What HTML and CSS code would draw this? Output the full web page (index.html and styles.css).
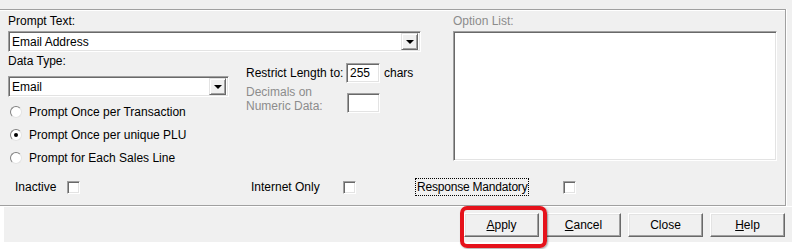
FILE: index.html
```html
<!DOCTYPE html>
<html lang="en">
<head>
    <meta charset="UTF-8">
    <title>Prompt Settings</title>
    <link rel="stylesheet" href="styles.css">
</head>
<body>
    <div class="dialog">
        <div class="panel">
            <div class="panel-body">
                <div class="left">
                    <div class="label">Prompt Text:</div>
                    <div class="combo prompt-combo">
                        <span class="combo-text">Email Address</span>
                        <span class="drop"><i class="arrow"></i></span>
                    </div>

                    <div class="row2">
                        <div class="col-a">
                            <div class="label">Data Type:</div>
                            <div class="combo type-combo">
                                <span class="combo-text">Email</span>
                                <span class="drop"><i class="arrow"></i></span>
                            </div>
                            <div class="radios">
                                <div class="radio-row"><span class="radio"></span>Prompt Once per Transaction</div>
                                <div class="radio-row"><span class="radio checked"></span>Prompt Once per unique PLU</div>
                                <div class="radio-row"><span class="radio"></span>Prompt for Each Sales Line</div>
                            </div>
                        </div>

                        <div class="col-b">
                            <div class="field-row">
                                <span class="field-label">Restrict Length to:</span>
                                <span class="textbox">255</span>
                                <span class="unit">chars</span>
                            </div>
                            <div class="field-row decimals">
                                <span class="field-label disabled">Decimals on<br>Numeric Data:</span>
                                <span class="textbox small"></span>
                            </div>
                        </div>
                    </div>
                </div>

                <div class="options">
                    <div class="label disabled">Option List:</div>
                    <div class="listbox"></div>
                </div>
            </div>

            <div class="checks">
                <div class="check-cell inactive"><span class="check-label">Inactive</span><span class="checkbox"></span></div>
                <div class="check-cell internet"><span class="check-label">Internet Only</span><span class="checkbox"></span></div>
                <div class="check-cell response"><span class="check-label"><span class="focus">Response Mandatory</span></span><span class="checkbox"></span></div>
            </div>
        </div>
    </div>

    <div class="button-bar">
        <span class="highlight"><button class="btn"><u>A</u>pply</button></span>
        <button class="btn"><u>C</u>ancel</button>
        <button class="btn">Close</button>
        <button class="btn"><u>H</u>elp</button>
    </div>
</body>
</html>
```

FILE: styles.css
```css
body {
    margin: 0;
    width: 792px;
    height: 249px;
    overflow: hidden;
    background: #fff;
    font-family: "Liberation Sans", Arial, sans-serif;
    font-size: 12px;
    color: #000;
}

.dialog {
    background: #f0f0f0;
    padding-top: 9px;
}

.panel {
    width: 786px;
    height: 197px;
    box-sizing: border-box;
    border-top: 1px solid #a0a0a0;
    border-right: 1px solid #a0a0a0;
    border-bottom: 1px solid #a0a0a0;
    box-shadow: inset 0 1px #fff, 1px 0 #fff;
}

.panel-body {
    display: flex;
    padding: 4px 0 0 8px;
}

.label {
    height: 14px;
    line-height: 14px;
}

.disabled {
    color: #8c8c8c;
}

/* sunken 3d edge used by inputs */
.combo,
.textbox,
.listbox,
.checkbox {
    background: #fff;
    box-sizing: border-box;
    border: 1px solid;
    border-color: #a0a0a0 #fff #fff #a0a0a0;
    box-shadow: inset 1px 1px #696969, inset -1px -1px #e3e3e3;
}

.left {
    width: 445px;
}

.combo {
    margin-top: 3px;
    height: 21px;
    display: flex;
    align-items: center;
    padding: 0 2px 0 3px;
}

.prompt-combo {
    width: 413px;
}

.type-combo {
    width: 221px;
    margin-top: 8px;
}

.combo-text {
    flex: 1;
}

.drop {
    width: 17px;
    height: 17px;
    box-sizing: border-box;
    background: #f0f0f0;
    border: 1px solid;
    border-color: #e3e3e3 #696969 #696969 #e3e3e3;
    box-shadow: inset 1px 1px #fff, inset -1px -1px #a0a0a0;
    display: flex;
    align-items: center;
    justify-content: center;
}

.arrow {
    width: 0;
    height: 0;
    border-left: 4px solid transparent;
    border-right: 4px solid transparent;
    border-top: 4px solid #000;
    margin-top: 1px;
}

.row2 {
    display: flex;
    margin-top: 2px;
}

.col-a {
    width: 238px;
}

.radios {
    margin-top: 3px;
}

.radio-row {
    height: 23px;
    display: flex;
    align-items: center;
}

.radio {
    width: 12px;
    height: 12px;
    box-sizing: border-box;
    margin: 0 7px 0 2px;
    border-radius: 50%;
    background: #fff;
    border: 1px solid;
    border-color: #808080 #e3e3e3 #e3e3e3 #808080;
    display: flex;
    align-items: center;
    justify-content: center;
}

.radio.checked::after {
    content: "";
    width: 4px;
    height: 4px;
    border-radius: 50%;
    background: #000;
}

.col-b {
    padding-top: 9px;
}

.field-row {
    display: flex;
    align-items: center;
}

.field-label {
    width: 100px;
    line-height: 14px;
}

.textbox {
    width: 34px;
    height: 20px;
    padding: 2px 0 0 3px;
    line-height: 14px;
}

.unit {
    margin-left: 4px;
}

.decimals {
    margin-top: 2px;
    align-items: flex-end;
}

.decimals .textbox {
    margin-left: 1px;
    width: 33px;
}

.options {
    width: 324px;
}

.listbox {
    margin-top: 3px;
    height: 130px;
}

.checks {
    display: grid;
    grid-template-columns: 236px 164px auto;
    padding-left: 15px;
    margin-top: 9px;
    height: 18px;
}

.check-cell {
    display: flex;
    align-items: center;
    white-space: nowrap;
}

.inactive .check-label {
    width: 52px;
}

.internet .check-label {
    width: 92px;
}

.response .check-label {
    width: 148px;
}

.focus {
    display: inline-block;
    border: 1px dotted #000;
    padding: 1px 1px 1px 1px;
    line-height: 14px;
    letter-spacing: -0.2px;
}

.checkbox {
    width: 13px;
    height: 13px;
}

.button-bar {
    margin-left: 4px;
    height: 36px;
    box-sizing: border-box;
    background: #f0f0f0;
    border-top: 1px solid #fff;
    display: flex;
    justify-content: flex-end;
    gap: 7px;
    padding: 6px 7px 0 0;
}

.btn {
    width: 75px;
    height: 24px;
    padding: 0;
    font-family: "Liberation Sans", Arial, sans-serif;
    font-size: 12px;
    color: #000;
    background: #f0f0f0;
    border: 1px solid;
    border-color: #fff #696969 #696969 #fff;
    box-shadow: inset -1px -1px #a0a0a0, inset 1px 1px #e3e3e3;
}

.highlight {
    position: relative;
    display: inline-flex;
}

.highlight::after {
    content: "";
    position: absolute;
    top: -7px;
    left: -4px;
    right: -8px;
    bottom: -6px;
    border: 4px solid #e5121b;
    border-radius: 7px;
    box-shadow: 1px 1px 2px rgba(0, 0, 0, 0.35);
    pointer-events: none;
}
```
